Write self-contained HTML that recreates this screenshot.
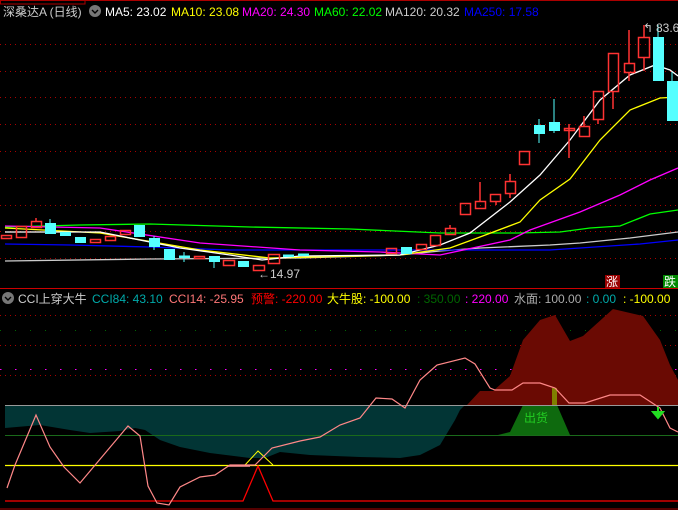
<!DOCTYPE html>
<html><head><meta charset="utf-8"><style>
html,body{margin:0;padding:0;background:#000;width:678px;height:510px;overflow:hidden}
svg{display:block}
text{font-family:"Liberation Sans","Noto Sans CJK SC",sans-serif;font-size:12px}
</style></head><body>
<svg width="678" height="510" viewBox="0 0 678 510" xmlns="http://www.w3.org/2000/svg">
<rect width="678" height="510" fill="#000"/>
<line x1="0" y1="0.5" x2="678" y2="0.5" stroke="#a00" />
<polyline points="0.5,0 0.5,4 85,4 85,0" fill="none" stroke="#a00"/>
<!-- top dotted grid -->
<g stroke="#a00" stroke-dasharray="1,4">
<line x1="0" y1="44.5" x2="678" y2="44.5"/><line x1="0" y1="71.5" x2="678" y2="71.5"/>
<line x1="0" y1="97.5" x2="678" y2="97.5"/><line x1="0" y1="124.5" x2="678" y2="124.5"/>
<line x1="0" y1="151.5" x2="678" y2="151.5"/><line x1="0" y1="178.5" x2="678" y2="178.5"/>
<line x1="0" y1="205.5" x2="678" y2="205.5"/><line x1="0" y1="231.5" x2="678" y2="231.5"/>
<line x1="0" y1="258.5" x2="678" y2="258.5"/>
</g>
<!-- MAs -->
<g fill="none" stroke-width="1.3">
<polyline stroke="#ccc" points="5,261 150,259 300,258 400,255 440,251 480,248 550,245 580,243 630,238 678,232"/>
<polyline stroke="#00f" points="5,244 70,245 150,247 230,250 300,250 480,250 550,250 580,248 640,244 678,240"/>
<polyline stroke="#0f0" points="5,227 80,225 150,224 250,227 350,229 440,233 517,233 560,232 590,228 620,226 650,214 678,210"/>
<polyline stroke="#f0f" points="5,226 100,228 200,243 300,250 380,252 440,255 510,240 530,230 580,212 620,195 650,180 678,168"/>
<polyline stroke="#ff0" points="5,228 100,233 200,250 270,258 400,255 450,248 480,237 520,222 540,200 570,179 600,140 630,110 660,98 678,97"/>
<polyline stroke="#fff" points="5,232 100,232 180,248 230,255 262,260 300,256 400,255 440,245 470,233 510,202 540,175 570,140 600,100 630,75 655,65 670,70 678,76"/>
</g>
<!-- candles -->
<g stroke-width="1.5">
<g stroke="#f33" fill="none">
<rect x="1.5" y="235.5" width="10" height="3"/><rect x="16.5" y="226.5" width="10" height="11"/>
<rect x="31.5" y="221.5" width="10" height="6"/><rect x="90.5" y="239.5" width="10" height="3"/>
<rect x="105.5" y="236.5" width="10" height="4"/><rect x="120.5" y="230.5" width="10" height="4"/>
<rect x="194.5" y="256.5" width="10" height="2"/><rect x="223.5" y="260.5" width="11" height="5"/>
<rect x="253.5" y="265.5" width="11" height="5"/><rect x="268.5" y="254.5" width="11" height="9"/>
<rect x="386.5" y="248.5" width="10" height="5"/><rect x="416.5" y="244.5" width="10" height="5"/>
<rect x="430.5" y="235.5" width="10" height="10"/><rect x="445.5" y="228.5" width="10" height="6"/>
<rect x="460.5" y="203.5" width="10" height="11"/><rect x="475.5" y="201.5" width="10" height="7"/>
<rect x="490.5" y="194.5" width="10" height="7"/><rect x="505.5" y="181.5" width="10" height="12"/>
<rect x="519.5" y="151.5" width="10" height="13"/><rect x="564.5" y="128.5" width="10" height="2"/>
<rect x="579.5" y="126.5" width="10" height="10"/><rect x="593.5" y="91.5" width="10" height="28"/>
<rect x="608.5" y="53.5" width="10" height="38"/><rect x="624.5" y="63.5" width="10" height="9"/>
<rect x="638.5" y="37.5" width="11" height="20"/>
<path d="M36 218V221M450 225V228M480 182V201M510 174V181M510 193V198M569 124V158M584 116V126M598 119V124M613 91V109M629 30V63M629 72V81M644 25V37M644 57V71M496 201V205"/>
</g>
<g fill="#5ff" stroke="#5ff" stroke-width="1">
<rect x="45.5" y="223.5" width="10" height="10"/><rect x="60.5" y="232.5" width="10" height="3"/>
<rect x="75.5" y="237.5" width="10" height="5"/><rect x="134.5" y="225.5" width="10" height="11"/>
<rect x="149.5" y="238.5" width="10" height="8"/><rect x="164.5" y="249.5" width="10" height="10"/>
<rect x="179.5" y="256" width="10" height="1.5"/><rect x="209.5" y="256.5" width="10" height="5"/>
<rect x="238.5" y="261.5" width="10" height="5"/><rect x="283.5" y="255" width="10" height="1.5"/>
<rect x="298.5" y="254" width="10" height="1.5"/><rect x="401.5" y="247.5" width="10" height="6"/>
<rect x="534.5" y="125.5" width="10" height="8"/><rect x="549.5" y="122.5" width="10" height="8"/>
<rect x="653.5" y="37.5" width="10" height="43"/><rect x="667.5" y="81.5" width="11" height="39"/>
<path d="M50 219V223M539 119V143M554 99V133M658 25V37M672 72V81M154 236V250M214 262V268M184 252V262"/>
</g></g>
<text x="258" y="278" fill="#ccc">←14.97</text>
<text x="643" y="32" fill="#ccc">↰</text><text x="656" y="32" fill="#ccc">83.6</text>
<!-- header -->
<text x="3" y="16" fill="#ccc" font-size="13">深桑达A (日线)</text>
<circle cx="95" cy="11" r="6" fill="#777"/><path d="M92 10l3 3 3-3" stroke="#000" fill="none" stroke-width="1.4"/>
<text x="105" y="16" fill="#fff">MA5: 23.02</text>
<text x="171" y="16" fill="#ff0">MA10: 23.08</text>
<text x="242" y="16" fill="#f0f">MA20: 24.30</text>
<text x="314" y="16" fill="#0f0">MA60: 22.02</text>
<text x="385" y="16" fill="#ccc">MA120: 20.32</text>
<text x="464" y="16" fill="#00f">MA250: 17.58</text>
<rect x="605" y="275" width="15" height="13" fill="#900"/><text x="606" y="286" fill="#fff" font-size="12">涨</text>
<rect x="663" y="275" width="15" height="13" fill="#080"/><text x="664" y="286" fill="#fff" font-size="12">跌</text>
<line x1="0" y1="288.5" x2="678" y2="288.5" stroke="#c00"/>
<!-- lower header -->
<circle cx="8" cy="298" r="6" fill="#777"/><path d="M5 297l3 3 3-3" stroke="#000" fill="none" stroke-width="1.4"/>
<text x="18" y="303" fill="#ccc">CCI上穿大牛</text>
<text x="92" y="303" fill="#0aa">CCI84: 43.10</text>
<text x="169" y="303" fill="#f77">CCI14: -25.95</text>
<text x="251" y="303" fill="#f00">预警: -220.00</text>
<text x="327" y="303" fill="#ff0">大牛股: -100.00</text>
<text x="417" y="303" fill="#060">: 350.00</text>
<text x="465" y="303" fill="#f0f">: 220.00</text>
<text x="514" y="303" fill="#aaa">水面: 100.00</text>
<text x="586" y="303" fill="#0aa">: 0.00</text>
<text x="623" y="303" fill="#ff0">: -100.00</text>
<!-- lower grid -->
<g stroke-dasharray="1,4">
<line x1="0" y1="315.5" x2="678" y2="315.5" stroke="#a00"/>
<line x1="0" y1="330.5" x2="678" y2="330.5" stroke="#060" stroke-dasharray="1,14"/>
<line x1="0" y1="345.5" x2="678" y2="345.5" stroke="#a00"/>
<line x1="0" y1="369.5" x2="678" y2="369.5" stroke="#f0f" stroke-dasharray="1.5,13.5"/>
<line x1="0" y1="375.5" x2="678" y2="375.5" stroke="#a00"/>
</g>
<!-- areas -->
<polygon fill="#023535" points="5,405 465,405 460,410 455,420 440,445 420,455 400,458 360,457 310,455 280,452 265,458 250,458 210,453 180,447 160,440 145,430 135,428 120,431 90,433 70,430 40,425 5,428"/>
<polygon fill="#6a0a03" points="467,405 480,391 493,391 510,376 523,340 540,320 555,315 570,341 583,336 613,309 643,316 660,340 670,365 678,380 678,405"/>
<polygon fill="#0e6a0e" points="498,435 510,432 523,405 557,405 570,435"/>
<text x="524" y="422" fill="#2c2" font-size="13">出货</text>
<rect x="552" y="388" width="5" height="17" fill="#808000"/>
<line x1="5" y1="405.5" x2="678" y2="405.5" stroke="#999"/>
<line x1="5" y1="435.5" x2="678" y2="435.5" stroke="#1a6a1a"/>
<line x1="5" y1="465.5" x2="678" y2="465.5" stroke="#ff0" stroke-width="1.3"/>
<polyline fill="none" stroke="#f00" stroke-width="1.3" points="5,501 243,501 258,466 273,501 678,501"/>
<polyline fill="none" stroke="#ff0" points="245,465 258,451 273,465"/>
<line x1="228" y1="466" x2="250" y2="466" stroke="#f99" stroke-width="1.5"/>
<line x1="0" y1="509" x2="678" y2="509" stroke="#a00"/>
<polyline fill="none" stroke="#f88" stroke-width="1.2" points="7,488 15,465 36,415 50,447 64,467 80,483 128,426 140,436 148,486 157,503 169,505 180,487 200,477 215,475 230,465 240,465 255,465 272,448 300,441 320,437 340,425 360,418 376,398 392,399 405,408 420,380 437,365 465,358 475,364 490,388 495,390 512,390 523,383 540,383 555,388 569,403 585,403 610,395 640,395 660,408 670,428 678,432"/>
<path d="M658 407V413M653 412h10l-5 6z" stroke="#2d2" fill="#2d2" stroke-width="2"/>
</svg>
</body></html>
